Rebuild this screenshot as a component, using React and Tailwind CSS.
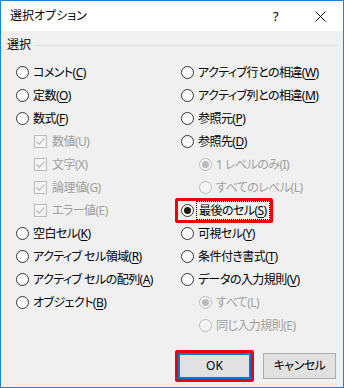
import React from "react";

const font = {
  fontFamily: '"Noto Sans", "Noto Sans CJK JP", sans-serif',
};

function Radio({ checked, disabled }) {
  return (
    <span
      className={`flex h-[13px] w-[13px] shrink-0 items-center justify-center rounded-full border ${
        disabled ? "border-[#bcbcbc] bg-[#f4f4f4]" : "border-[#333333] bg-white"
      }`}
    >
      {checked && (
        <span
          className={`h-[7px] w-[7px] rounded-full ${
            disabled ? "bg-[#bcbcbc]" : "bg-[#1a1a1a]"
          }`}
        />
      )}
    </span>
  );
}

function Check() {
  return (
    <span className="flex h-[13px] w-[13px] shrink-0 items-center justify-center border border-[#bcbcbc] bg-[#f4f4f4]">
      <svg width="11" height="11" viewBox="0 0 11 11">
        <path d="M1.5 5.5 L4.2 8.2 L9.5 2.5" fill="none" stroke="#b4b4b4" strokeWidth="1.1" />
      </svg>
    </span>
  );
}

function Label({ text, k, disabled }) {
  if (disabled) {
    return (
      <span className="whitespace-nowrap text-[#a0a0a0]">
        {text}({k})
      </span>
    );
  }
  return (
    <span className="whitespace-nowrap text-black">
      {text}(<span className="underline decoration-1 underline-offset-[2px]">{k}</span>)
    </span>
  );
}

function RadioRow({ text, k, checked, disabled, sub }) {
  return (
    <div className={`flex h-[23px] items-center gap-[4px] ${sub ? "pl-[18px]" : ""}`}>
      <Radio checked={checked} disabled={disabled} />
      <Label text={text} k={k} disabled={disabled} />
    </div>
  );
}

function CheckRow({ text, k }) {
  return (
    <div className="flex h-[23px] items-center gap-[5px] pl-[18px]">
      <Check />
      <Label text={text} k={k} disabled />
    </div>
  );
}

export default function App() {
  return (
    <div
      className="flex h-[388px] w-[344px] flex-col border border-[#1883d7] text-[12px] leading-[16px] tracking-[-0.55px] [font-feature-settings:'palt']"
      style={font}
    >
      <div className="flex h-[30px] shrink-0 items-center bg-white">
        <span className="pl-[9px] tracking-[0px] text-black">選択オプション</span>
        <div className="ml-auto flex h-full">
          <div className="flex w-[45px] items-center justify-center text-[13px] text-black">?</div>
          <div className="flex w-[45px] items-center justify-center">
            <svg width="11" height="11" viewBox="0 0 11 11">
              <path d="M0.5 0.5 L10.5 10.5 M10.5 0.5 L0.5 10.5" stroke="#111" strokeWidth="1" />
            </svg>
          </div>
        </div>
      </div>

      <div className="flex flex-1 flex-col bg-[#f0f0f0]">
        <div className="flex items-center gap-[5px] pl-[6px] pr-[6px] pt-[6px]">
          <span className="tracking-[0px] text-black">選択</span>
          <div className="h-px flex-1 bg-[#dcdcdc]" />
        </div>

        <div className="mt-[8px] flex pl-[15px]">
          <div className="w-[165px] shrink-0">
            <RadioRow text="コメント" k="C" />
            <RadioRow text="定数" k="O" />
            <RadioRow text="数式" k="F" />
            <CheckRow text="数値" k="U" />
            <CheckRow text="文字" k="X" />
            <CheckRow text="論理値" k="G" />
            <CheckRow text="エラー値" k="E" />
            <RadioRow text="空白セル" k="K" />
            <RadioRow text="アクティブ セル領域" k="R" />
            <RadioRow text="アクティブ セルの配列" k="A" />
            <RadioRow text="オブジェクト" k="B" />
          </div>
          <div className="flex-1">
            <RadioRow text="アクティブ行との相違" k="W" />
            <RadioRow text="アクティブ列との相違" k="M" />
            <RadioRow text="参照元" k="P" />
            <RadioRow text="参照先" k="D" />
            <RadioRow text="1 レベルのみ" k="I" checked disabled sub />
            <RadioRow text="すべてのレベル" k="L" disabled sub />
            <div className="relative flex h-[23px] items-center gap-[2px]">
              <Radio checked />
              <span className="border border-dotted border-black px-[2px] leading-[17px]">
                <Label text="最後のセル" k="S" />
              </span>
              <span className="pointer-events-none absolute left-[-6px] top-[-1px] h-[25px] w-[98px] rounded-[2px] border-[3px] border-[#f20000]" />
            </div>
            <RadioRow text="可視セル" k="Y" />
            <RadioRow text="条件付き書式" k="T" />
            <RadioRow text="データの入力規則" k="V" />
            <RadioRow text="すべて" k="L" checked disabled sub />
            <RadioRow text="同じ入力規則" k="E" disabled sub />
          </div>
        </div>

        <div className="mt-auto flex items-center justify-end gap-[9px] pb-[5px] pr-[7px]">
          <div className="rounded-[2px] border-[3px] border-[#f20000]">
            <button className="flex h-[26px] w-[73px] items-center justify-center border-2 border-[#0078d7] bg-[#e1e1e1] tracking-[0px] text-black">
              OK
            </button>
          </div>
          <button className="flex h-[26px] w-[73px] items-center justify-center border border-[#adadad] bg-[#e1e1e1] text-black">
            キャンセル
          </button>
        </div>
      </div>
    </div>
  );
}
